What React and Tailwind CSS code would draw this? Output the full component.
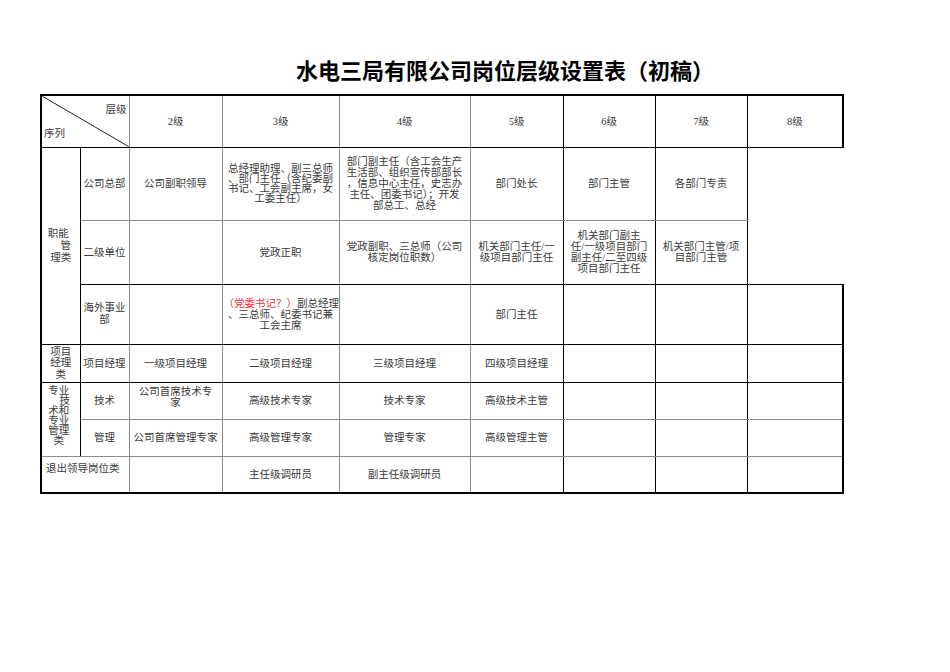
import React from "react";

// 竖线：左边缘 0..8，右边缘 1..9
const leftEdge = [
  "border-l-2 border-l-black",
  "border-l border-l-black",
  "border-l border-l-[#8c8c8c]",
  "border-l border-l-[#8c8c8c]",
  "border-l border-l-[#8c8c8c]",
  "border-l border-l-[#8c8c8c]",
  "border-l border-l-black",
  "border-l border-l-black",
  "border-l border-l-black",
];
const rightEdge = [
  "",
  "border-r border-r-black",
  "border-r border-r-[#8c8c8c]",
  "border-r border-r-[#8c8c8c]",
  "border-r border-r-[#8c8c8c]",
  "border-r border-r-[#8c8c8c]",
  "border-r border-r-black",
  "border-r border-r-black",
  "border-r border-r-black",
  "border-r-2 border-r-black",
];
// 横线：上边缘 0..7，下边缘 1..8
const topEdge = [
  "border-t-2 border-t-black",
  "border-t border-t-black",
  "border-t border-t-[#8c8c8c]",
  "border-t border-t-black",
  "border-t border-t-black",
  "border-t border-t-black",
  "border-t border-t-[#8c8c8c]",
  "border-t border-t-[#8c8c8c]",
];
const bottomEdge = [
  "",
  "border-b border-b-black",
  "border-b border-b-[#8c8c8c]",
  "border-b border-b-black",
  "border-b border-b-black",
  "border-b border-b-black",
  "border-b border-b-[#8c8c8c]",
  "border-b border-b-[#8c8c8c]",
  "border-b-2 border-b-black",
];

function Cell({ c, cs = 1, r, rs = 1, noRight = false, className = "", children }) {
  return (
    <td
      colSpan={cs}
      rowSpan={rs}
      className={`${leftEdge[c]} ${noRight ? "" : rightEdge[c + cs]} ${topEdge[r]} ${bottomEdge[r + rs]} px-px text-center align-middle ${className}`}
    >
      {children}
    </td>
  );
}

// 多行文字，逐行换行
function Lines({ items }) {
  return items.map((t, i) => (
    <div key={i} className="whitespace-nowrap">
      {t}
    </div>
  ));
}

const levels = ["2级", "3级", "4级", "5级", "6级", "7级", "8级"];
const widths = [39, 49, 93, 117, 131, 93, 92, 92, 96];

export default function App() {
  return (
    <div
      className="w-[950px] h-[672px] bg-white text-[#3a3a3a] overflow-hidden"
      style={{ fontFamily: '"Liberation Serif", "Noto Sans CJK SC", serif' }}
    >
      {/* 标题 */}
      <div
        className="pt-[55px] pl-[296px] text-[22px] leading-[28px] font-bold text-black whitespace-nowrap"
        style={{ fontFamily: '"Noto Sans CJK SC", sans-serif' }}
      >
        水电三局有限公司岗位层级设置表（初稿）
      </div>

      <table className="mt-[11px] ml-[40px] border-collapse table-fixed w-[802px] text-[10.5px] leading-[11px]">
        <colgroup>
          {widths.map((w, i) => (
            <col key={i} style={{ width: w }} />
          ))}
        </colgroup>
        <tbody>
          {/* 表头 */}
          <tr className="h-[52px]">
            <Cell c={0} cs={2} r={0} className="relative p-0">
              <svg className="absolute inset-0 w-full h-full" preserveAspectRatio="none" viewBox="0 0 100 100">
                <line x1="0" y1="0" x2="100" y2="100" stroke="#222" strokeWidth="1" vectorEffect="non-scaling-stroke" />
              </svg>
              <div className="flex flex-col justify-between h-[50px] pt-[8px] pb-[7px] px-px">
                <div className="text-right">层级</div>
                <div className="text-left">序列</div>
              </div>
            </Cell>
            {levels.map((l, i) => (
              <Cell key={l} c={i + 2} r={0}>
                {l}
              </Cell>
            ))}
          </tr>

          {/* 公司总部 */}
          <tr className="h-[73px]">
            <Cell c={0} r={1} rs={3} className="leading-[12px]">
              <div className="pr-[5px]">职能</div>
              <div className="pl-[10px]">管</div>
              <div>理类</div>
            </Cell>
            <Cell c={1} r={1}>公司总部</Cell>
            <Cell c={2} r={1}>公司副职领导</Cell>
            <Cell c={3} r={1} className="leading-[10px]">
              <Lines items={["总经理助理、副三总师", "、部门主任（含纪委副", "书记、工会副主席，女", "工委主任）"]} />
            </Cell>
            <Cell c={4} r={1}>
              <Lines
                items={[
                  "部门副主任（含工会生产",
                  "生活部、组织宣传部部长",
                  "，信息中心主任，史志办",
                  "主任、团委书记）；开发",
                  "部总工、总经",
                ]}
              />
            </Cell>
            <Cell c={5} r={1}>部门处长</Cell>
            <Cell c={6} r={1}>部门主管</Cell>
            <Cell c={7} r={1}>各部门专责</Cell>
            <Cell c={8} r={1} rs={2} noRight />
          </tr>

          {/* 二级单位 */}
          <tr className="h-[64px]">
            <Cell c={1} r={2}>二级单位</Cell>
            <Cell c={2} r={2} />
            <Cell c={3} r={2}>党政正职</Cell>
            <Cell c={4} r={2}>
              <Lines items={["党政副职、三总师（公司", "核定岗位职数）"]} />
            </Cell>
            <Cell c={5} r={2}>
              <Lines items={["机关部门主任/一", "级项目部门主任"]} />
            </Cell>
            <Cell c={6} r={2}>
              <Lines items={["机关部门副主", "任/一级项目部门", "副主任/二至四级", "项目部门主任"]} />
            </Cell>
            <Cell c={7} r={2}>
              <Lines items={["机关部门主管/项", "目部门主管"]} />
            </Cell>
          </tr>

          {/* 海外事业部 */}
          <tr className="h-[60px]">
            <Cell c={1} r={3} className="leading-[12px]">
              <Lines items={["海外事业", "部"]} />
            </Cell>
            <Cell c={2} r={3} />
            <Cell c={3} r={3}>
              <div className="whitespace-nowrap">
                <span className="text-[#e03c3c]">（党委书记？）</span>副总经理
              </div>
              <Lines items={["、三总师、纪委书记兼", "工会主席"]} />
            </Cell>
            <Cell c={4} r={3} />
            <Cell c={5} r={3}>部门主任</Cell>
            <Cell c={6} r={3} />
            <Cell c={7} r={3} />
            <Cell c={8} r={3} />
          </tr>

          {/* 项目经理 */}
          <tr className="h-[38px]">
            <Cell c={0} r={4} className="leading-[11.5px]">
              <Lines items={["项目", "经理", "类"]} />
            </Cell>
            <Cell c={1} r={4}>项目经理</Cell>
            <Cell c={2} r={4}>一级项目经理</Cell>
            <Cell c={3} r={4}>二级项目经理</Cell>
            <Cell c={4} r={4}>三级项目经理</Cell>
            <Cell c={5} r={4}>四级项目经理</Cell>
            <Cell c={6} r={4} />
            <Cell c={7} r={4} />
            <Cell c={8} r={4} />
          </tr>

          {/* 技术 */}
          <tr className="h-[37px]">
            <Cell c={0} r={5} rs={2} className="leading-[10px] pb-[6px]">
              <div className="pr-[4px]">专业</div>
              <div className="pl-[8px]">技</div>
              <div className="pr-[4px]">术和</div>
              <div className="pr-[4px]">专业</div>
              <div className="pr-[4px]">管理</div>
              <div className="pr-[4px]">类</div>
            </Cell>
            <Cell c={1} r={5}>技术</Cell>
            <Cell c={2} r={5} className="pb-[8px]">
              <Lines items={["公司首席技术专", "家"]} />
            </Cell>
            <Cell c={3} r={5}>高级技术专家</Cell>
            <Cell c={4} r={5}>技术专家</Cell>
            <Cell c={5} r={5}>高级技术主管</Cell>
            <Cell c={6} r={5} />
            <Cell c={7} r={5} />
            <Cell c={8} r={5} />
          </tr>

          {/* 管理 */}
          <tr className="h-[37px]">
            <Cell c={1} r={6}>管理</Cell>
            <Cell c={2} r={6}>
              <span className="whitespace-nowrap">公司首席管理专家</span>
            </Cell>
            <Cell c={3} r={6}>高级管理专家</Cell>
            <Cell c={4} r={6}>管理专家</Cell>
            <Cell c={5} r={6}>高级管理主管</Cell>
            <Cell c={6} r={6} />
            <Cell c={7} r={6} />
            <Cell c={8} r={6} />
          </tr>

          {/* 退出领导岗位类 */}
          <tr className="h-[37px]">
            <Cell c={0} cs={2} r={7} className="!text-left !align-top pt-[6px] pl-[4px] whitespace-nowrap">
              退出领导岗位类
            </Cell>
            <Cell c={2} r={7} />
            <Cell c={3} r={7}>主任级调研员</Cell>
            <Cell c={4} r={7}>副主任级调研员</Cell>
            <Cell c={5} r={7} />
            <Cell c={6} r={7} />
            <Cell c={7} r={7} />
            <Cell c={8} r={7} />
          </tr>
        </tbody>
      </table>
    </div>
  );
}
